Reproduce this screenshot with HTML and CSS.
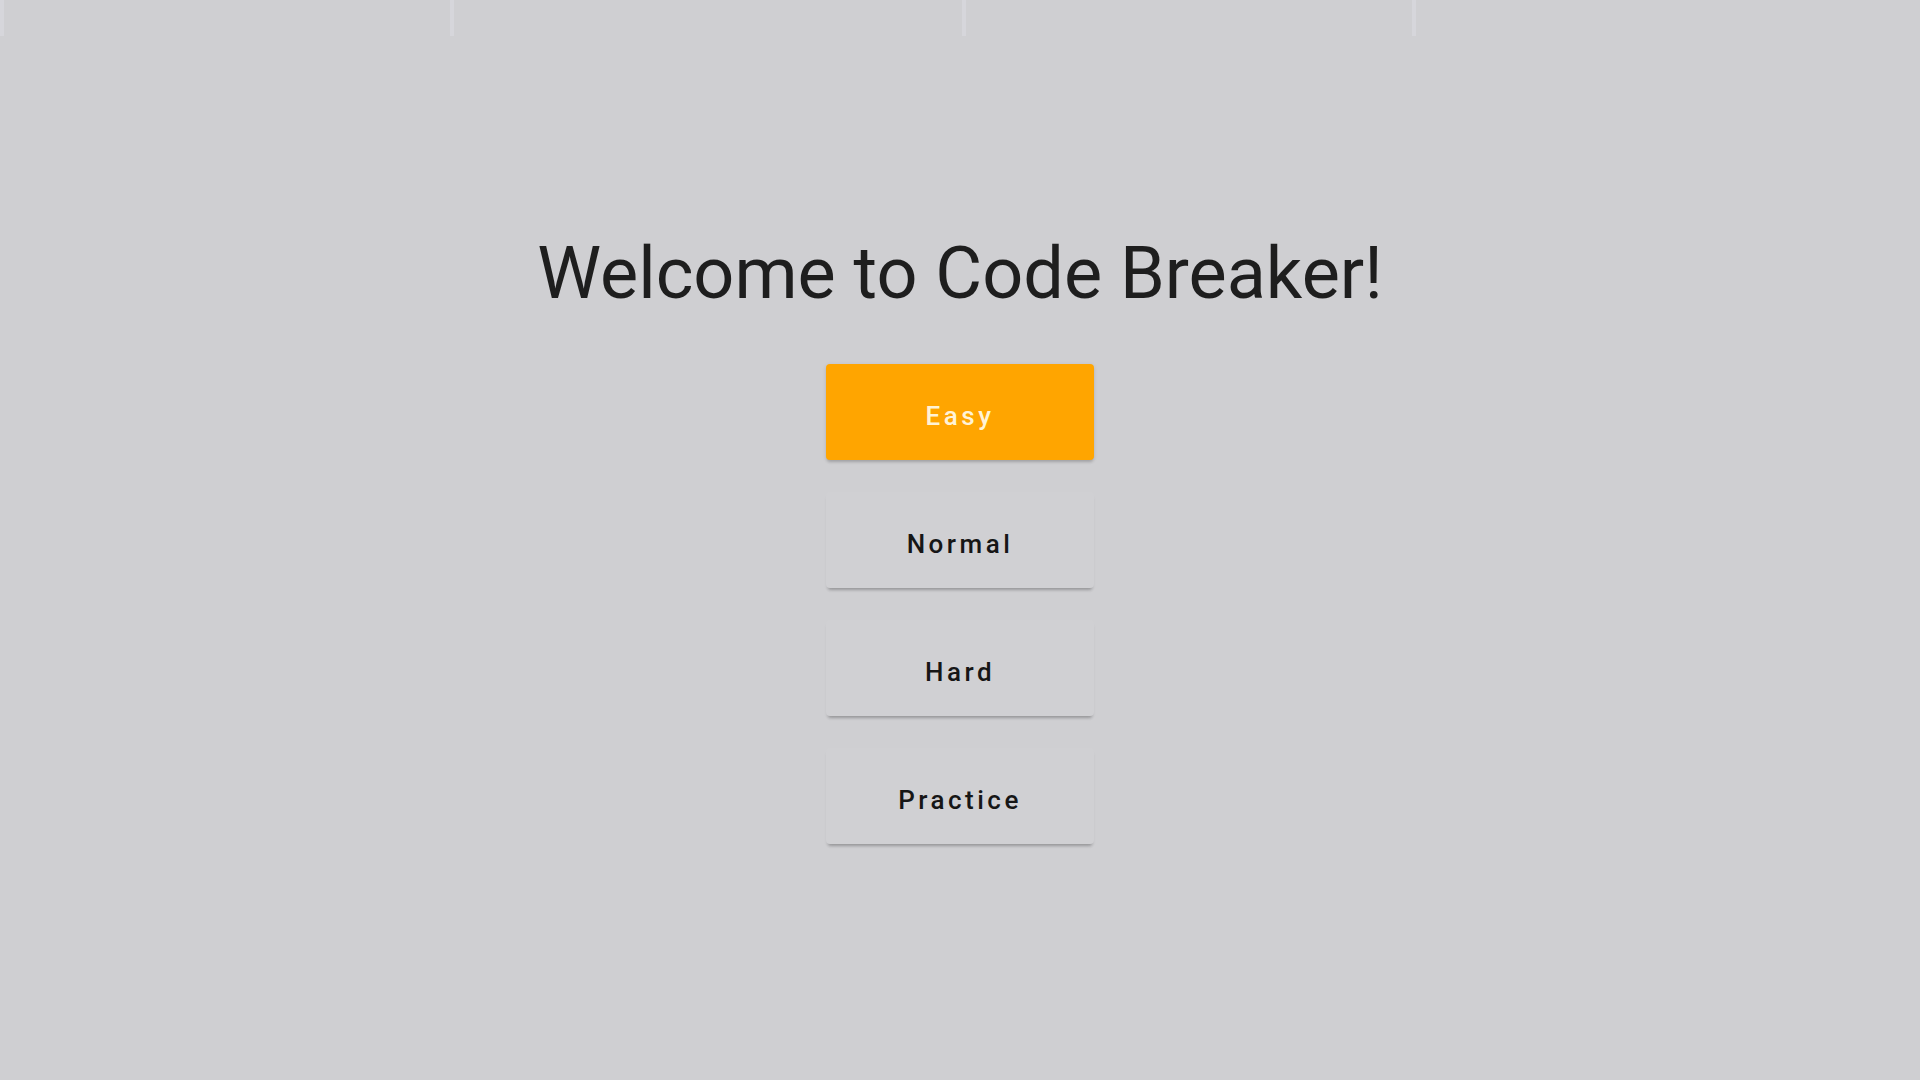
FILE: index.html
```html
<!DOCTYPE html>
<html lang="en">
<head>
<meta charset="utf-8">
<title>Code Breaker</title>
<link rel="stylesheet" href="styles.css">
</head>
<body>
<div class="topbar">
  <div class="col c1"></div>
  <div class="col c2"></div>
  <div class="col c3"></div>
  <div class="col c4"></div>
</div>
<main class="menu">
  <h1 class="title">Welcome to Code Breaker!</h1>
  <div class="buttons">
    <button class="btn btn-active">Easy</button>
    <button class="btn">Normal</button>
    <button class="btn">Hard</button>
    <button class="btn">Practice</button>
  </div>
</main>
</body>
</html>
```
FILE: styles.css
```css
html, body {
  margin: 0;
  padding: 0;
  width: 1920px;
  height: 1080px;
  overflow: hidden;
}
body {
  background: #cfcfd2;
  font-family: Roboto, "Liberation Sans", sans-serif;
  color: #222;
}
.topbar {
  display: flex;
  height: 36px;
}
.col {
  height: 100%;
  border-left: 4px solid rgba(225, 225, 232, 0.4);
}
.c1 { width: 446px; }
.c2 { width: 508px; }
.c3 { width: 446px; }
.c4 { flex: 1; }
.menu {
  display: flex;
  flex-direction: column;
  align-items: center;
  padding-top: 202px;
}
.title {
  margin: 0;
  font-size: 72px;
  line-height: 72px;
  font-weight: 400;
  color: #1e1e1e;
}
.buttons {
  display: flex;
  flex-direction: column;
  gap: 32px;
  margin-top: 54px;
}
.btn {
  width: 268px;
  height: 96px;
  border: none;
  border-radius: 4px;
  background: #d0d0d3;
  font-family: Roboto, "Liberation Sans", sans-serif;
  font-size: 26px;
  font-weight: 500;
  letter-spacing: 3.5px;
  color: #161616;
  padding: 7px 0 0;
  box-shadow: 0 4px 3px -2px rgba(0,0,0,0.2), 0 3px 4px -2px rgba(0,0,0,0.12);
}
.btn-active {
  background: #ffa500;
  color: #fff3d6;
  box-shadow: 0 3px 3px -1px rgba(0,0,0,0.16), 0 1px 4px 0 rgba(0,0,0,0.1);
}
```
